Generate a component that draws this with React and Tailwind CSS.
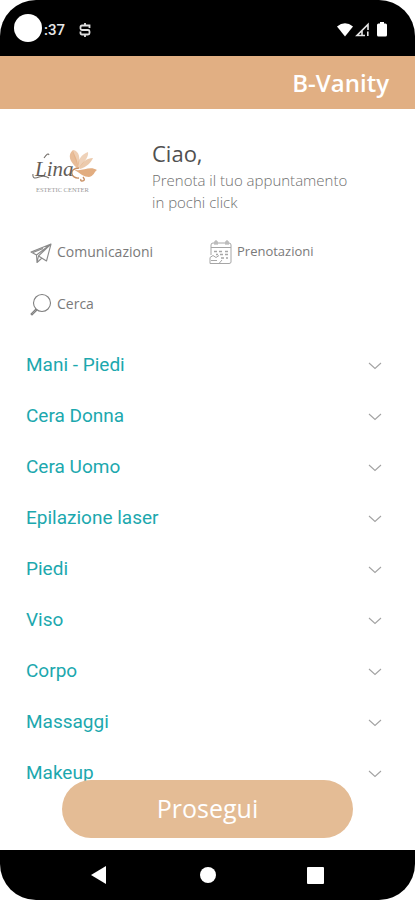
const services = [
  "Mani - Piedi",
  "Cera Donna",
  "Cera Uomo",
  "Epilazione laser",
  "Piedi",
  "Viso",
  "Corpo",
  "Massaggi",
  "Makeup",
];

function StatusBar() {
  return (
    <div className="flex h-14 items-center justify-between rounded-t-[36px] bg-black pt-1 pr-7 pl-3.5 text-white">
      <div className="flex items-center">
        <span className="-mt-1 size-7 rounded-full bg-white" />
        <span className="ml-0.5 font-['Roboto',sans-serif] text-[15px] font-medium text-[#e8e8e8]">:37</span>
        <svg className="ml-3.5 h-4 w-3" viewBox="0 0 12 16" fill="none" stroke="#e0e0e0" strokeWidth="1.8">
          <path d="M10.5 6V3.5H3Q1.5 3.5 1.5 5V6.5Q1.5 8 3 8H9Q10.5 8 10.5 9.5V11Q10.5 12.5 9 12.5H3Q1.5 12.5 1.5 11V9.5M6 1V3.5M6 12.5V15" />
        </svg>
      </div>
      <div className="flex items-center">
        <svg className="h-4 w-4" viewBox="0 0 16 16" fill="#fff">
          <path d="M0 4.5Q8-2 16 4.5L8 14.5Z" />
        </svg>
        <svg className="ml-0.5 h-4 w-4" viewBox="0 0 16 16" fill="none" stroke="#e5e5e5" strokeWidth="1.6">
          <path d="M10 13.5H2L13 2.5V8M7 8.5V13M12.8 9.5V14" />
        </svg>
        <svg className="ml-1.5 h-4 w-2.5" viewBox="0 0 10 16" fill="#fff">
          <path d="M3 0H7V1.5H8.5Q10 1.5 10 3V13Q10 14.5 8.5 14.5H1.5Q0 14.5 0 13V3Q0 1.5 1.5 1.5H3Z" />
        </svg>
      </div>
    </div>
  );
}

function Logo() {
  return (
    <svg className="h-12 w-17 shrink-0" viewBox="0 0 68 48" role="img" aria-label="Lina Estetic Center">
      <g fill="#e2ad80">
        <path d="M45 19C38 13 35 6 41 1C42 6 46 10 46 18Z" opacity=".8" />
        <path d="M41 1C47 2 49 8 46 19C45 12 41 8 41 1Z" opacity=".6" />
        <path d="M46 18C45 11 50 5 56 3C57 8 52 13 47 19Z" opacity=".55" />
        <path d="M47 19C50 13 55 9 61 9C59 14 54 18 48 20Z" opacity=".65" />
        <path d="M41 20C49 24 57 16 65 21C62 23 62 27 57 28C52 28 49 25 41 20Z" />
      </g>
      <path d="M47 19C36 19 39 30 47 29M51 28Q54 32 50 32Q48 32 49 30" fill="none" stroke="#c88e61" strokeWidth="1.3" />
      <path d="M12 9Q16 3 17 6M1 25Q0 31 7 28Q13 26 17 29" fill="none" stroke="#75706b" strokeWidth="1.1" />
      <text x="3" y="27" fill="#625c57" fontFamily="Liberation Serif, serif" fontStyle="italic" fontSize="21">
        Lina
      </text>
      <text x="4" y="43" fill="#999" fontFamily="Liberation Serif, serif" fontSize="6.5">
        ESTETIC CENTER
      </text>
    </svg>
  );
}

function PlaneIcon() {
  return (
    <svg className="h-6 w-6" viewBox="0 0 24 24" fill="none" stroke="#8a8a8a" strokeWidth="1.1" strokeLinejoin="round">
      <path d="M22 4L2 12L7.5 15L22 4L9.5 16L17.5 21L22 4M7.5 15L8 22.5L9.5 16M8 22.5L13 18M4 12.5L14 8.5" />
    </svg>
  );
}

function CalendarIcon() {
  return (
    <svg className="h-6 w-6" viewBox="0 0 24 24" fill="none" stroke="#a6a6a6" strokeWidth="1">
      <path d="M2 15V5Q2 3 4 3H20Q22 3 22 5V22Q22 23.5 20 23.5H10M2 7.5H22M6 1V5M8 1V5M17 1V5M19 1V5M6 1H8M17 1H19" />
      <path d="M5 11.5H8M10 11.5H13M16 11.5H19M7 14.5H9M11 14.5H14M16 14.5H19M12 18H15M17 18H19" strokeWidth="1.6" />
      <path d="M1 17.5L4 15.5L7 17.5L10 15.5M1 17.5V23.5H10L13 20M2 20.5H8" />
    </svg>
  );
}

function SearchIcon() {
  return (
    <svg className="h-6 w-6" viewBox="0 0 24 24" fill="none" stroke="#808080" strokeWidth="1.1">
      <circle cx="13" cy="11" r="8.5" />
      <path d="M7 17L2 22L3 23L8 18" />
    </svg>
  );
}

const actionClass = "flex h-[52px] items-center gap-1 text-[#7a7a7a]";

export default function App() {
  return (
    <div className="flex min-h-screen flex-col bg-white font-['Open_Sans',sans-serif]">
      <StatusBar />
      <header className="flex h-[53px] items-center justify-end bg-[#e1af83] px-[26px]">
        <h1 className="text-2xl font-semibold text-white">B-Vanity</h1>
      </header>

      <main className="relative flex flex-1 flex-col">
        <section className="flex px-8 pt-7">
          <div className="w-30 shrink-0 pt-3">
            <Logo />
          </div>
          <div className="text-[#707070]">
            <h2 className="text-[22px] leading-8 text-[#505050]">Ciao,</h2>
            <p className="text-[15px] leading-[22px] font-light">
              Prenota il tuo appuntamento
              <br />
              in pochi click
            </p>
          </div>
        </section>

        <nav className="mt-[13px] grid grid-cols-2 pr-[26px] pl-[29px]">
          <button type="button" className={actionClass}>
            <PlaneIcon />
            <span className="text-sm">Comunicazioni</span>
          </button>
          <button type="button" className={actionClass}>
            <CalendarIcon />
            <span className="text-[13px]">Prenotazioni</span>
          </button>
          <button type="button" className={actionClass}>
            <SearchIcon />
            <span className="text-sm">Cerca</span>
          </button>
        </nav>

        <ul className="mt-2.5 font-['Roboto',sans-serif] text-[19px] text-[#1ca8ae]">
          {services.map((name) => (
            <li key={name}>
              <button type="button" className="flex h-[51px] w-full items-center justify-between pr-8 pl-[26px]">
                <span>{name}</span>
                <svg className="h-4 w-4" viewBox="0 0 16 16" fill="none" stroke="#a3a3a3" strokeWidth="1.1">
                  <path d="M2 5L8 10.5L14 5" />
                </svg>
              </button>
            </li>
          ))}
        </ul>

        <div className="absolute inset-x-0 bottom-0 flex px-[62px] pb-3">
          <button type="button" className="h-[58px] flex-1 rounded-full bg-[#e4bc95] text-[25px] text-white">
            Prosegui
          </button>
        </div>
      </main>

      <div className="flex h-[50px] items-center justify-center gap-[91px] rounded-b-[36px] bg-black">
        <button type="button" aria-label="Indietro">
          <svg className="h-[18px] w-[18px]" viewBox="0 0 18 18" fill="#fff">
            <path d="M0 9L15 0V18Z" />
          </svg>
        </button>
        <button type="button" aria-label="Home" className="size-4 rounded-full bg-white" />
        <button type="button" aria-label="Recenti" className="size-[17px] rounded-[1px] bg-white" />
      </div>
    </div>
  );
}
